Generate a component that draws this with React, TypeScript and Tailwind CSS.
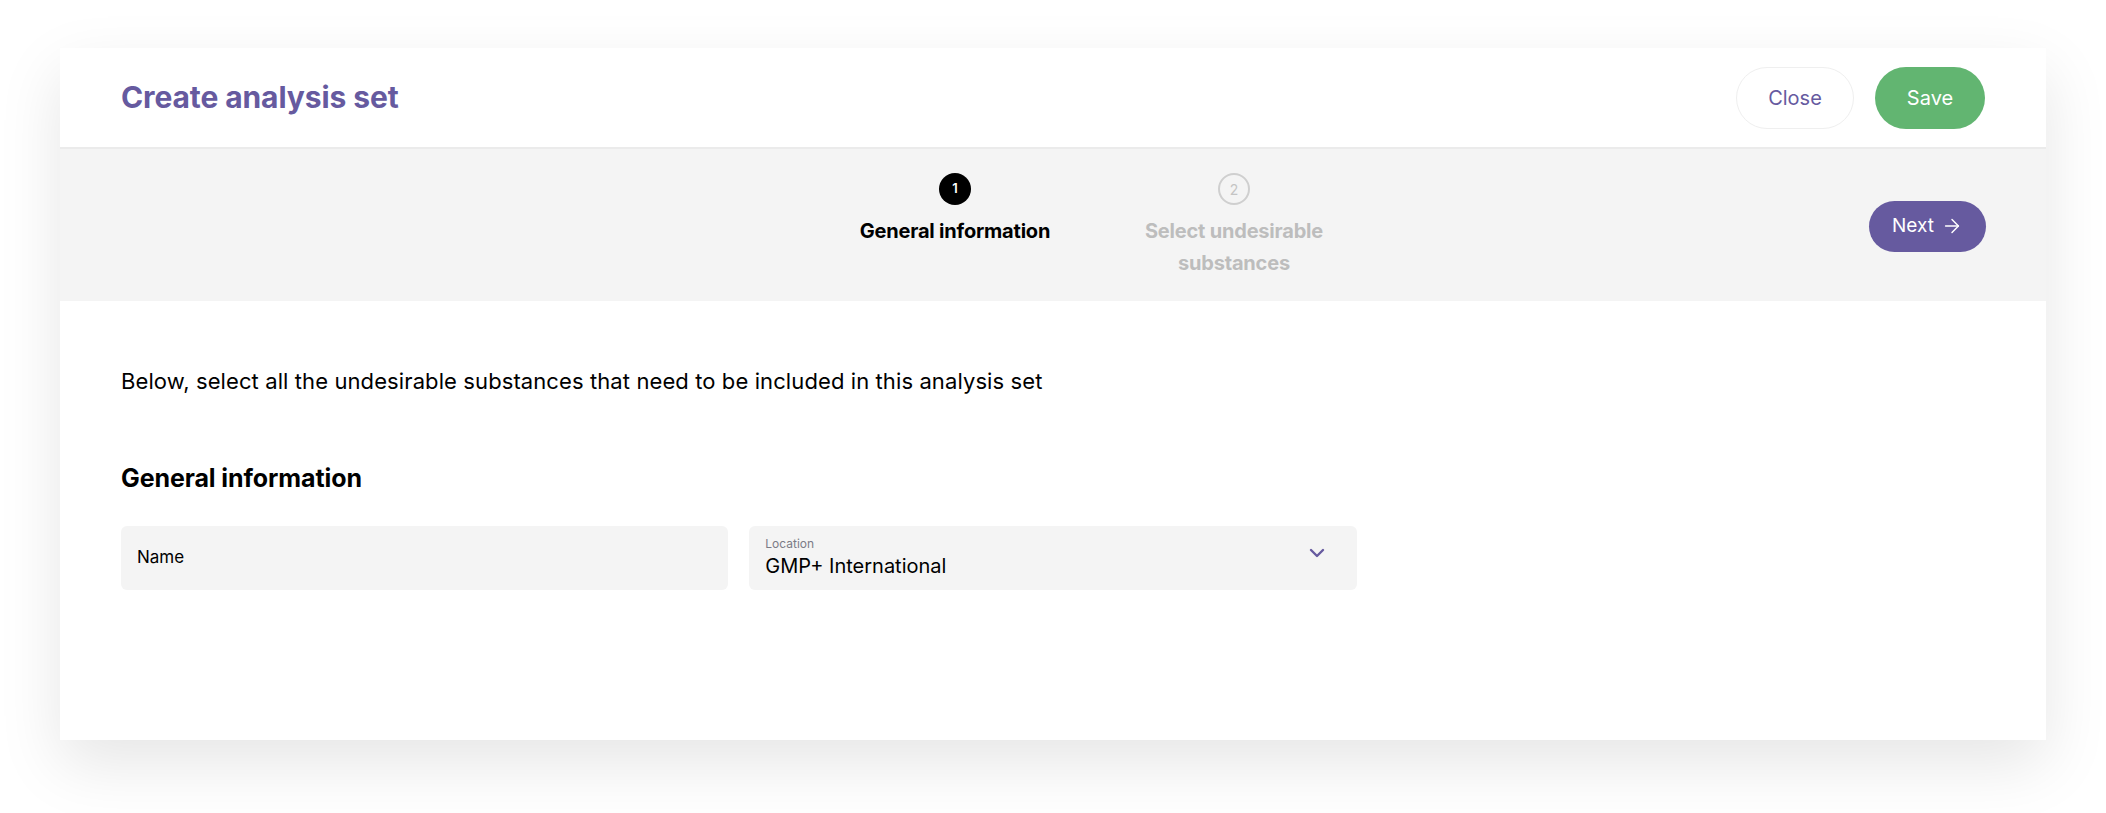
import { ArrowRight, ChevronDown } from 'lucide-react';

const font = { fontFamily: 'Inter, Lato, sans-serif' };

function Step({ n, label, active }: { n: number; label: string; active: boolean }) {
  return (
    <div className="w-[240px] flex flex-col items-center">
      <div
        className={
          active
            ? 'w-[32px] h-[32px] rounded-full bg-black text-white flex items-center justify-center text-[13px] font-semibold'
            : 'w-[32px] h-[32px] rounded-full border-2 border-[#cfcfcf] text-[#c4c4c4] flex items-center justify-center text-[14px]'
        }
      >
        {n}
      </div>
      <div
        className={
          'mt-[10px] text-center text-[20px] leading-[32px] font-bold max-w-[200px] tracking-[-0.2px] ' +
          (active ? 'text-black' : 'text-[#bdbdbd]')
        }
      >
        {label}
      </div>
    </div>
  );
}

export default function App() {
  return (
    <div className="min-h-screen bg-white pt-[48px] px-[60px]" style={font}>
      <div className="bg-white shadow-[0_24px_60px_rgba(0,0,0,0.10)] flex flex-col">
        {/* header */}
        <div className="h-[101px] border-b-2 border-[#ebebeb] px-[61px] flex items-center justify-between">
          <h1 className="text-[30px] font-bold text-[#665a9f] tracking-[-0.1px]">Create analysis set</h1>
          <div className="flex items-center gap-[21px]">
            <button className="h-[62px] w-[118px] rounded-full border border-[#efefef] text-[#665a9f] text-[20px]">
              Close
            </button>
            <button className="h-[62px] w-[110px] rounded-full bg-[#62b571] text-white text-[20px]">
              Save
            </button>
          </div>
        </div>

        {/* stepper */}
        <div className="bg-[#f4f4f4] px-[60px] pt-[24px] pb-[22px] flex items-center">
          <div className="flex-1 flex justify-center pl-[200px]">
            <div className="flex gap-[39px] items-start">
              <Step n={1} label="General information" active />
              <Step n={2} label="Select undesirable substances" active={false} />
            </div>
          </div>
          <button className="h-[51px] w-[117px] rounded-full bg-[#665a9f] text-white text-[19px] flex items-center justify-center gap-[7px]">
            Next
            <ArrowRight className="w-[22px] h-[22px]" strokeWidth={1.6} />
          </button>
        </div>

        {/* body */}
        <div className="px-[61px] pt-[66px] pb-[150px]">
          <p className="text-[22px] leading-[28px] text-black tracking-[0.1px]">
            Below, select all the undesirable substances that need to be included in this analysis set
          </p>
          <h2 className="mt-[68px] text-[25px] leading-[30px] font-bold text-black tracking-[-0.1px]">General information</h2>
          <div className="mt-[33px] grid grid-cols-3 gap-[21px]">
            <div className="h-[64px] rounded-[6px] bg-[#f4f4f4] px-[16px] flex items-center">
              <span className="text-[17px] text-black">Name</span>
            </div>
            <div className="h-[64px] rounded-[6px] bg-[#f4f4f4] pl-[16px] pr-[28px] flex items-center justify-between">
              <div className="flex flex-col">
                <span className="text-[12px] leading-[14px] text-[#7b7b86]">Location</span>
                <span className="text-[20px] leading-[26px] text-black mt-[2px]">GMP+ International</span>
              </div>
              <ChevronDown className="w-[24px] h-[24px] text-[#665a9f] -mt-[10px]" strokeWidth={2.4} />
            </div>
          </div>
        </div>
      </div>
    </div>
  );
}
